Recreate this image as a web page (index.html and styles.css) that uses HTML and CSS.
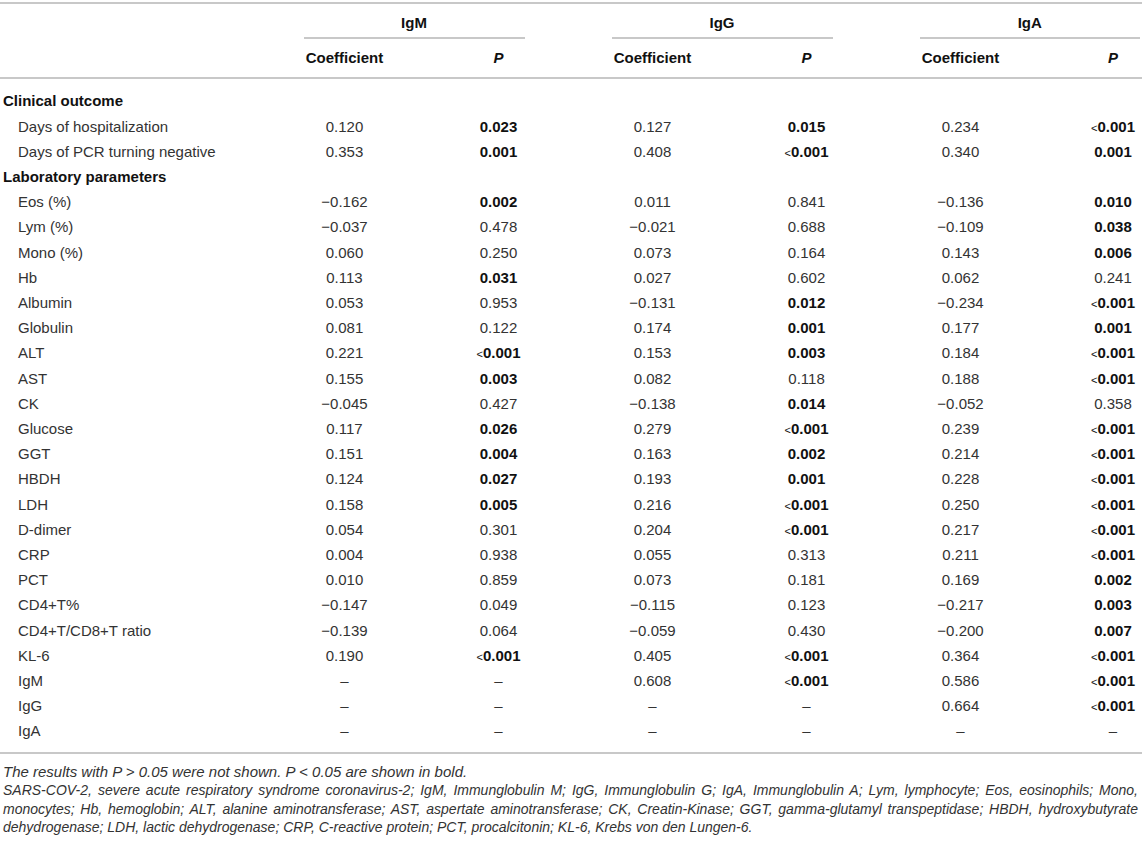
FILE: index.html
```html
<!DOCTYPE html>
<html lang="en">
<head>
<meta charset="utf-8">
<title>Correlation of antibodies with clinical outcome and laboratory parameters</title>
<link rel="stylesheet" href="styles.css">
</head>
<body>
<div class="page">
  <table class="tbl">
    <colgroup>
      <col class="c-label">
      <col class="c-val"><col class="c-val">
      <col class="c-val"><col class="c-val">
      <col class="c-val"><col class="c-last">
    </colgroup>
    <thead>
      <tr class="h1">
        <th></th>
        <th colspan="2"><div class="grp">IgM</div></th>
        <th colspan="2"><div class="grp">IgG</div></th>
        <th colspan="2"><div class="grp grp-last">IgA</div></th>
      </tr>
      <tr class="h2">
        <th></th>
        <th>Coefficient</th><th><i>P</i></th>
        <th>Coefficient</th><th><i>P</i></th>
        <th>Coefficient</th><th class="last"><i>P</i></th>
      </tr>
    </thead>
    <tbody>
      <tr class="sec first"><td colspan="7">Clinical outcome</td></tr>
      <tr><td class="lab">Days of hospitalization</td><td>0.120</td><td><b>0.023</b></td><td>0.127</td><td><b>0.015</b></td><td>0.234</td><td class="last"><b><span class="lt">&lt;</span>0.001</b></td></tr>
      <tr><td class="lab">Days of PCR turning negative</td><td>0.353</td><td><b>0.001</b></td><td>0.408</td><td><b><span class="lt">&lt;</span>0.001</b></td><td>0.340</td><td class="last"><b>0.001</b></td></tr>
      <tr class="sec"><td colspan="7">Laboratory parameters</td></tr>
      <tr><td class="lab">Eos (%)</td><td>−0.162</td><td><b>0.002</b></td><td>0.011</td><td>0.841</td><td>−0.136</td><td class="last"><b>0.010</b></td></tr>
      <tr><td class="lab">Lym (%)</td><td>−0.037</td><td>0.478</td><td>−0.021</td><td>0.688</td><td>−0.109</td><td class="last"><b>0.038</b></td></tr>
      <tr><td class="lab">Mono (%)</td><td>0.060</td><td>0.250</td><td>0.073</td><td>0.164</td><td>0.143</td><td class="last"><b>0.006</b></td></tr>
      <tr><td class="lab">Hb</td><td>0.113</td><td><b>0.031</b></td><td>0.027</td><td>0.602</td><td>0.062</td><td class="last">0.241</td></tr>
      <tr><td class="lab">Albumin</td><td>0.053</td><td>0.953</td><td>−0.131</td><td><b>0.012</b></td><td>−0.234</td><td class="last"><b><span class="lt">&lt;</span>0.001</b></td></tr>
      <tr><td class="lab">Globulin</td><td>0.081</td><td>0.122</td><td>0.174</td><td><b>0.001</b></td><td>0.177</td><td class="last"><b>0.001</b></td></tr>
      <tr><td class="lab">ALT</td><td>0.221</td><td><b><span class="lt">&lt;</span>0.001</b></td><td>0.153</td><td><b>0.003</b></td><td>0.184</td><td class="last"><b><span class="lt">&lt;</span>0.001</b></td></tr>
      <tr><td class="lab">AST</td><td>0.155</td><td><b>0.003</b></td><td>0.082</td><td>0.118</td><td>0.188</td><td class="last"><b><span class="lt">&lt;</span>0.001</b></td></tr>
      <tr><td class="lab">CK</td><td>−0.045</td><td>0.427</td><td>−0.138</td><td><b>0.014</b></td><td>−0.052</td><td class="last">0.358</td></tr>
      <tr><td class="lab">Glucose</td><td>0.117</td><td><b>0.026</b></td><td>0.279</td><td><b><span class="lt">&lt;</span>0.001</b></td><td>0.239</td><td class="last"><b><span class="lt">&lt;</span>0.001</b></td></tr>
      <tr><td class="lab">GGT</td><td>0.151</td><td><b>0.004</b></td><td>0.163</td><td><b>0.002</b></td><td>0.214</td><td class="last"><b><span class="lt">&lt;</span>0.001</b></td></tr>
      <tr><td class="lab">HBDH</td><td>0.124</td><td><b>0.027</b></td><td>0.193</td><td><b>0.001</b></td><td>0.228</td><td class="last"><b><span class="lt">&lt;</span>0.001</b></td></tr>
      <tr><td class="lab">LDH</td><td>0.158</td><td><b>0.005</b></td><td>0.216</td><td><b><span class="lt">&lt;</span>0.001</b></td><td>0.250</td><td class="last"><b><span class="lt">&lt;</span>0.001</b></td></tr>
      <tr><td class="lab">D-dimer</td><td>0.054</td><td>0.301</td><td>0.204</td><td><b><span class="lt">&lt;</span>0.001</b></td><td>0.217</td><td class="last"><b><span class="lt">&lt;</span>0.001</b></td></tr>
      <tr><td class="lab">CRP</td><td>0.004</td><td>0.938</td><td>0.055</td><td>0.313</td><td>0.211</td><td class="last"><b><span class="lt">&lt;</span>0.001</b></td></tr>
      <tr><td class="lab">PCT</td><td>0.010</td><td>0.859</td><td>0.073</td><td>0.181</td><td>0.169</td><td class="last"><b>0.002</b></td></tr>
      <tr><td class="lab">CD4+T%</td><td>−0.147</td><td>0.049</td><td>−0.115</td><td>0.123</td><td>−0.217</td><td class="last"><b>0.003</b></td></tr>
      <tr><td class="lab">CD4+T/CD8+T ratio</td><td>−0.139</td><td>0.064</td><td>−0.059</td><td>0.430</td><td>−0.200</td><td class="last"><b>0.007</b></td></tr>
      <tr><td class="lab">KL-6</td><td>0.190</td><td><b><span class="lt">&lt;</span>0.001</b></td><td>0.405</td><td><b><span class="lt">&lt;</span>0.001</b></td><td>0.364</td><td class="last"><b><span class="lt">&lt;</span>0.001</b></td></tr>
      <tr><td class="lab">IgM</td><td>–</td><td>–</td><td>0.608</td><td><b><span class="lt">&lt;</span>0.001</b></td><td>0.586</td><td class="last"><b><span class="lt">&lt;</span>0.001</b></td></tr>
      <tr><td class="lab">IgG</td><td>–</td><td>–</td><td>–</td><td>–</td><td>0.664</td><td class="last"><b><span class="lt">&lt;</span>0.001</b></td></tr>
      <tr class="lastrow"><td class="lab">IgA</td><td>–</td><td>–</td><td>–</td><td>–</td><td>–</td><td class="last">–</td></tr>
    </tbody>
  </table>
  <div class="notes">
    <p class="lead">The results with P &gt; 0.05 were not shown. P &lt; 0.05 are shown in bold.</p>
    <p class="just">SARS-COV-2, severe acute respiratory syndrome coronavirus-2; IgM, Immunglobulin M; IgG, Immunglobulin G; IgA, Immunglobulin A; Lym, lymphocyte; Eos, eosinophils; Mono, monocytes; Hb, hemoglobin; ALT, alanine aminotransferase; AST, aspertate aminotransferase; CK, Creatin-Kinase; GGT, gamma-glutamyl transpeptidase; HBDH, hydroxybutyrate dehydrogenase; LDH, lactic dehydrogenase; CRP, C-reactive protein; PCT, procalcitonin; KL-6, Krebs von den Lungen-6.</p>
  </div>
</div>
</body>
</html>
```

FILE: styles.css
```css
html, body {
  margin: 0;
  padding: 0;
  background: #ffffff;
}

body {
  font-family: "Liberation Sans", Arial, Helvetica, sans-serif;
  font-size: 15px;
  color: #333333;
}

.page {
  width: 1142px;
  padding-top: 2px;
}

.tbl {
  width: 1142px;
  table-layout: fixed;
  border-collapse: separate;
  border-spacing: 0;
  border-top: 2px solid #c8c8c8;
}

.c-label { width: 267.5px; }
.c-val { width: 154px; }

.tbl th,
.tbl td {
  padding: 0;
  text-align: center;
  white-space: nowrap;
}

.tbl th {
  font-weight: bold;
  color: #111111;
}

.h1 th {
  line-height: 18px;
}

.grp {
  margin: 0 51px 0 36px;
  padding: 10px 0 5px;
  border-bottom: 2px solid #c8c8c8;
}

.grp-last {
  margin-right: 2px;
}

.h2 th {
  line-height: 18px;
  padding: 10px 0;
  border-bottom: 2px solid #c8c8c8;
}

.h2 i {
  font-style: italic;
}

.tbl td {
  height: 25.2px;
  line-height: 25.2px;
}

.tbl td.last,
.tbl th.last {
  padding-left: 46.5px;
}

.tbl td.lab {
  text-align: left;
  padding-left: 18px;
}

.sec td {
  text-align: left;
  padding-left: 3px;
  font-weight: bold;
  color: #111111;
}

.first td {
  padding-top: 9.4px;
}

.lastrow td {
  padding-bottom: 8px;
  border-bottom: 2px solid #c8c8c8;
}

.tbl b {
  font-weight: bold;
  color: #111111;
}

.lt {
  font-weight: normal;
  font-size: 11px;
  line-height: 0;
}

.notes {
  padding: 9px 4px 0 3px;
  font-size: 14px;
  font-style: italic;
  line-height: 18.5px;
}

.notes p {
  margin: 0;
}

.notes .lead {
  font-size: 15px;
}

.notes .just {
  text-align: justify;
}
```
